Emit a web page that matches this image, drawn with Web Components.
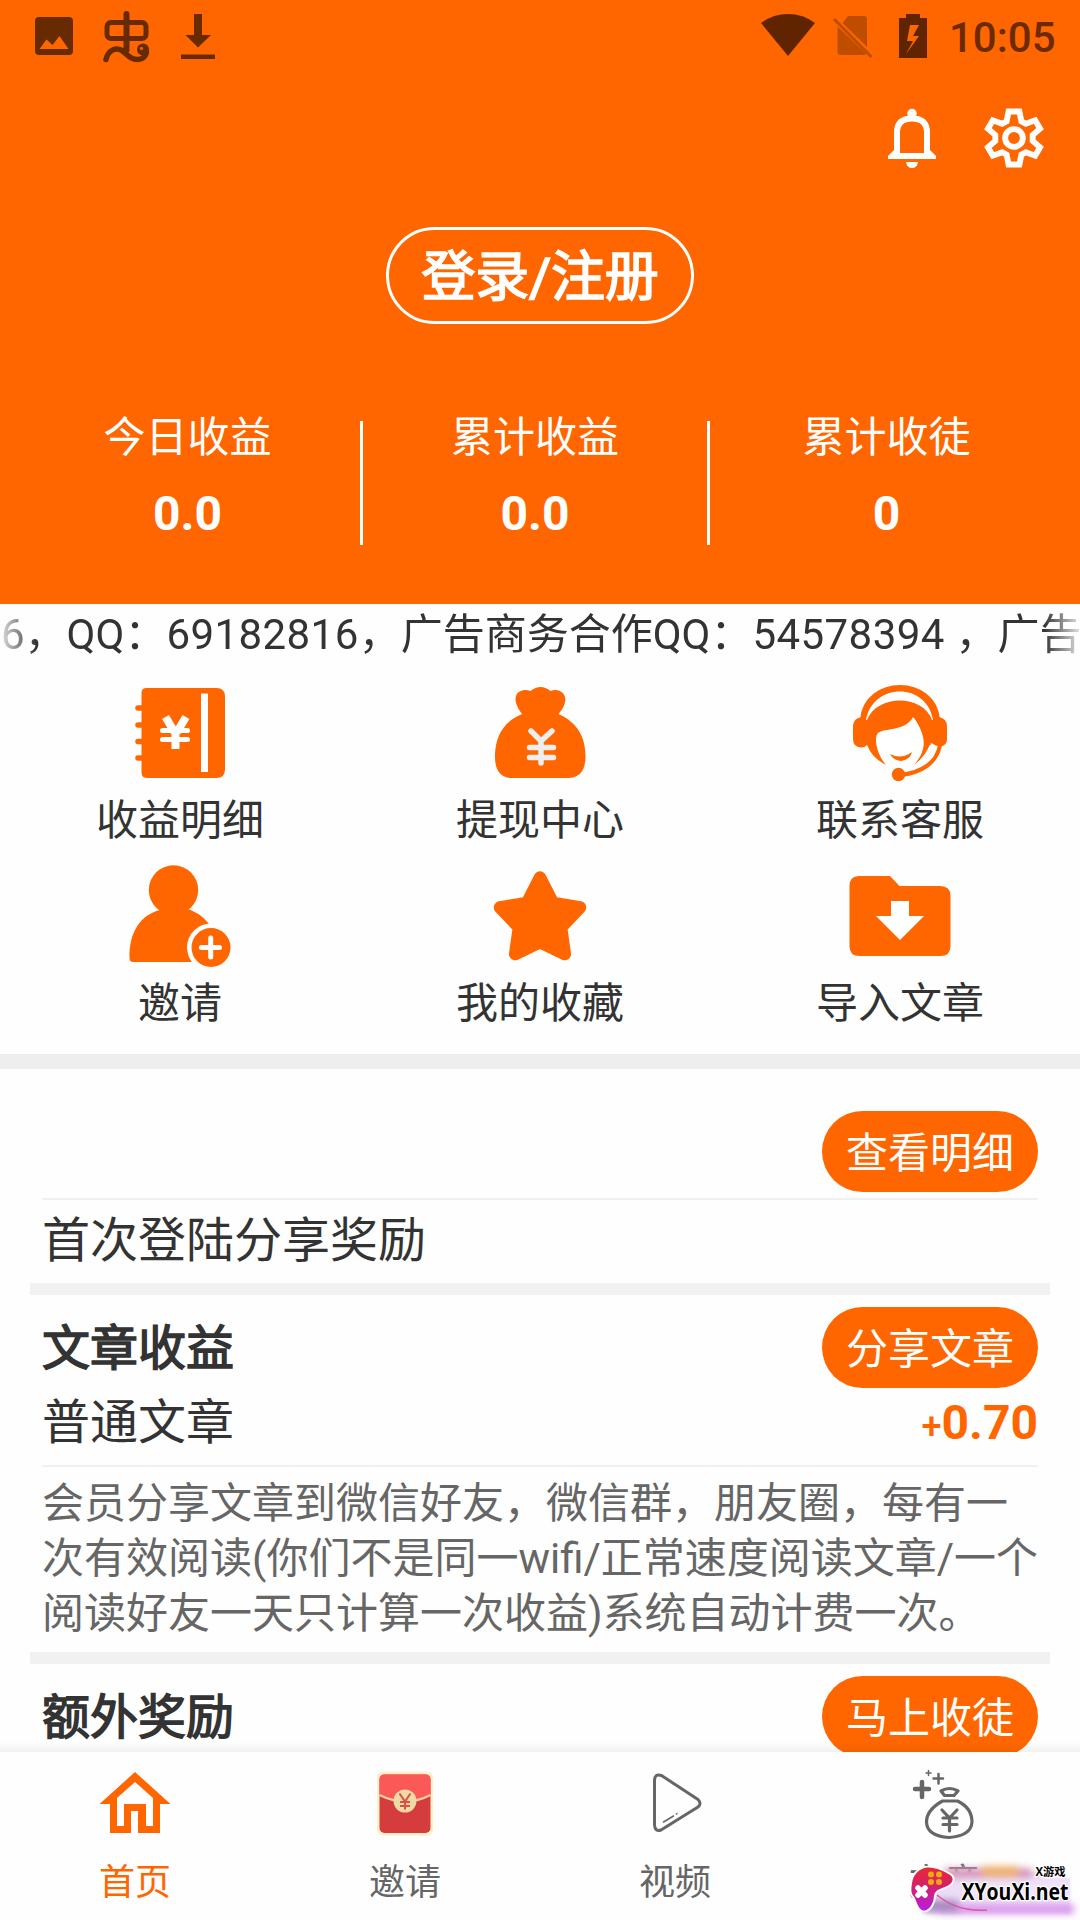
<!DOCTYPE html>
<html lang="zh-CN">
<head>
<meta charset="utf-8">
<title>首页</title>
<style>
html,body{margin:0;padding:0}
body{width:1080px;height:1920px;overflow:hidden;background:#fefefe;color:#333;font-family:Roboto,"Noto Sans CJK SC",sans-serif;font-size:42px}
.num{letter-spacing:.43px}
b{font-weight:400;-webkit-text-stroke:1.5px currentColor}
</style>
</head>
<body>
<app-shell>
  <app-header slot="header">
    <status-bar></status-bar>
    <stat-item label="今日收益" slot="stat">0.0</stat-item>
    <stat-item label="累计收益" slot="stat">0.0</stat-item>
    <stat-item label="累计收徒" slot="stat">0</stat-item>
  </app-header>
  <notice-ticker>6，QQ：<span class="num">69182816</span>，广告商务合作QQ：<span class="num">54578394 </span>，广告</notice-ticker>
  <menu-grid>
    <menu-item icon="book">收益明细</menu-item>
    <menu-item icon="bag">提现中心</menu-item>
    <menu-item icon="service">联系客服</menu-item>
    <menu-item icon="invite">邀请</menu-item>
    <menu-item icon="star">我的收藏</menu-item>
    <menu-item icon="folder">导入文章</menu-item>
  </menu-grid>
  <reward-card class="first">
    <pill-button slot="action">查看明细</pill-button>
    <span slot="note">首次登陆分享奖励</span>
  </reward-card>
  <reward-card class="article" rule-after>
    <b slot="title">文章收益</b>
    <pill-button slot="action">分享文章</pill-button>
    <span slot="sub">普通文章</span>
    <price-tag slot="price">0.70</price-tag>
    <span slot="text">会员分享文章到微信好友，微信群，朋友圈，每有一<br>次有效阅读(你们不是同一wifi/正常速度阅读文章/一个<br>阅读好友一天只计算一次收益)系统自动计费一次。</span>
  </reward-card>
  <reward-card class="extra">
    <b slot="title">额外奖励</b>
    <pill-button slot="action">马上收徒</pill-button>
  </reward-card>
  <tab-bar slot="tabs">
    <tab-item icon="home" active>首页</tab-item>
    <tab-item icon="packet">邀请</tab-item>
    <tab-item icon="play">视频</tab-item>
    <tab-item icon="money">文章</tab-item>
    <site-mark slot="mark"></site-mark>
  </tab-bar>
</app-shell>
<script>
const O = '#ff6600';
const ICONS = {
  image: `<svg width="38" height="38" viewBox="0 0 38 38"><path fill="#682a00" fill-rule="evenodd" d="M4 0h30q4 0 4 4v30q0 4-4 4H4q-4 0-4-4V4q0-4 4-4zM4.500 32h29L24.500 19l-7 9-6-5.500z"/></svg>`,
  bug: `<svg width="48" height="52" viewBox="0 0 48 52"><g fill="none" stroke="#682a00" stroke-width="5" stroke-linecap="round" stroke-linejoin="round"><rect x="4" y="11.500" width="39" height="16" rx="4"/><path stroke-width="6" d="M23.500 3v36"/><path stroke-width="5.500" d="M3 48.500C5 39 13 36 19 39.500 25 44 27 48.500 35 48.500 43 48 46 39 41 36.500"/></g><circle cx="40" cy="38.500" r="6" fill="#682a00"/><circle cx="38.500" cy="37.500" r="1.700" fill="#e65c00"/></svg>`,
  download: `<svg width="34" height="46" viewBox="0 0 34 46"><path fill="#682a00" d="M13 0h8v21h9L17 33.500 4.500 21H13zM0 40.500h34V45H0z"/></svg>`,
  wifi: `<svg width="54" height="42" viewBox="0 0 54 42"><path fill="#602500" d="M0 9Q12 0 27 0t27 9L27 42z"/></svg>`,
  sim: `<svg width="40" height="42" viewBox="0 0 40 42"><path fill="#bf4d00" d="M15 0h16q3 0 3 3v28L9.500 7zM4.500 10.500 33.500 38q-1 1-3 1h-23q-3 0-3-3z"/><path stroke="#bf4d00" stroke-width="3" d="m1 3 37.500 38"/></svg>`,
  battery: `<svg width="28" height="44" viewBox="0 0 28 44"><path fill="#602500" fill-rule="evenodd" d="M7 0h14v4h7v40H0V4h7zM11 11 8 27h6l-7 13 13-18h-6l6-11z"/></svg>`,
  bell: `<svg width="48" height="60" viewBox="0 0 48 60"><circle cx="24" cy="5.500" r="4.700" fill="#fff"/><path fill="none" stroke="#fff" stroke-width="6" d="M9 46V24.500q0-14 15-14t15 14V46"/><path fill="#fff" d="M0 51v-3l6-6V45h36v-3l6 6v3zM18 54h12q-1 6-6 6t-6-6z"/></svg>`,
  gear: `<svg width="60" height="60" viewBox="-.5 -.5 61 61"><g fill="none" stroke="#fff" stroke-width="6"><path d="M24.500 3h11l2 10 4.500 2.500 9.500-3.500 5 8.500-7.500 6.500v6l7.500 6.500-5 8.500-9.500-3.500-4.500 2.500-2 10h-11l-2-10-4.500-2.500-9.500 3.500-5-8.500 7.500-6.500v-6l-7.500-6.500 5-8.500 9.500 3.500 4.500-2.500z"/><circle cx="30" cy="30" r="9"/></g></svg>`,
  book: `<svg width="108" height="108" viewBox="2.500 0 108 108"><path fill="${O}" d="M21 9h72q8.500 0 8.500 8.500v73Q101.500 99 93 99H24q-6 0-6-5.500V14q0-5 5-5z"/><path stroke="${O}" stroke-width="5.500" stroke-linecap="round" d="M14.500 29h6M14.500 46h6M14.500 62.500h6M14.500 79h6"/><path fill="#fff" d="M77.500 14.500h7V93h-7z"/><path stroke="#fff" stroke-width="8" fill="none" d="m42 38 9 15M62.500 38l-9 15M52 49v21"/><path stroke="#fff" stroke-width="5" stroke-linecap="round" d="M39 51.500h25M39 60.500h25"/></svg>`,
  bag: `<svg width="108" height="108" viewBox="0 0 108 108"><path fill="${O}" d="M36 35C26 22 28 12 39 11q3 0 5.500 1 10-8 20 0 2-1 5-1c12 1 13 13 3 24C92 44 99 58 99.500 76 100 92 93 99 82 99H26C15 99 8.500 92 9 76 9.500 58 17 43 36 35z"/><path fill="none" stroke="#eee" stroke-width="5.500" stroke-linecap="round" stroke-linejoin="round" d="m45 52 10 10 11-10M55 62v22M43.500 68.500h24M43.500 78.500h24"/></svg>`,
  service: `<svg width="108" height="108" viewBox="0 0 108 108"><path fill="none" stroke="${O}" stroke-width="7" d="M17.500 41C21-1 87-1 90.500 41"/><path fill="${O}" d="M18 38q-11 0-11 10v12q0 8 8 8.500 4 0 6-2.500 5 13 19 20C30 74 28 58 32 54c6-5 28-2 35-16 13 16 11 34 2 47 10-5 14-12 16-21l4 2c8 4 12-1 12-6V47q0-7-8-9-7-20-25-23Q30 12 20 38z"/><path fill="#fff" d="M20 41C27 3 81 3 87 41h-1C77 15 31 15 21 41z"/><path fill="#fff" d="M30 60c1-6 23-4 34-12 3-3 4-6 4-9 6 9 12 20 9 31q-2 8-7 13H40Q31 76 30 60z"/><path fill="${O}" d="M44 75q11 6 22-2-2 8-11 9-8-1-11-7z"/><path fill="none" stroke="#fff" stroke-width="5" d="M86 67q-5 13-18 22"/><path fill="none" stroke="${O}" stroke-width="4" d="M94 66c-3 18-19 28-40 30"/><circle cx="52.500" cy="95.500" r="6.700" fill="${O}"/></svg>`,
  invite: `<svg width="108" height="108" viewBox="0 0 108 108"><circle cx="47.500" cy="28" r="24.700" fill="${O}"/><path fill="${O}" d="M34 47h28C82 54 94 72 94 100H7q-3.500 0-3.500-4C3 71 14 53 34 48z"/><circle cx="85" cy="85.500" r="24" fill="#fefefe"/><circle cx="85" cy="85.500" r="19.500" fill="${O}"/><path stroke="#fff" stroke-width="5" stroke-linecap="round" d="M75.500 85.500h18M84.700 76v19"/></svg>`,
  star: `<svg width="108" height="108" viewBox="0 0 108 108"><path fill="${O}" stroke="${O}" stroke-width="12.500" stroke-linejoin="round" d="m54 15.500 13 25.500L94 45.500 75 65.500l3.800 26.500L54 80 29.200 92 33 65.500 14 45.500 41 41z"/></svg>`,
  folder: `<svg width="108" height="108" viewBox="0 0 108 108"><path fill="${O}" d="M13 14h31l9.500 10H94q10.500 0 10.500 10v50q0 10-10 10h-81Q3.500 94 3.500 84V24Q3.500 14 13 14z"/><path fill="#fff" d="M45 39h18v15h15L54 78 30 54h15z"/></svg>`,
  home: `<svg width="72" height="72" viewBox="0 0 72 72"><path fill="${O}" fill-rule="evenodd" d="M36 5 71.500 37H61v29H39V44h-7v22H11V37H.5zM36 15 18 31v28h7V37h22v22h7V31z"/></svg>`,
  packet: `<svg width="72" height="72" viewBox="-.5 .5 72 72"><rect x="7.500" y="5" width="56" height="64" rx="6" fill="#fff0c8"/><rect x="10" y="8" width="51" height="58.500" rx="5" fill="#d43c3d"/><path fill="#fb5858" d="M10 29V13q0-5 5-5h41q5 0 5 5v16Q36 41 10 29z"/><path fill="none" stroke="#f6d0a0" stroke-width="2" d="M10 28.500q26 13 51 0"/><circle cx="35.500" cy="34.500" r="11.500" fill="#efd9a5"/><path fill="none" stroke="#d95149" stroke-width="2" d="m30 27 5.500 8 5.500-8M35.500 35v8M30.500 35.500h10M30.500 39.500h10"/></svg>`,
  play: `<svg width="72" height="72" viewBox="0 1 72 72"><path fill="none" stroke="#666" stroke-width="3" stroke-linejoin="round" d="M15.500 15q0-8 7-5.500l36.500 24q4 4 0 7.500L22 64q-6 2-6.500-5z"/><path stroke="#666" stroke-width="1.500" stroke-linecap="round" d="m24.500 56 10-6M37.500 48l.5-.3"/></svg>`,
  money: `<svg width="72" height="72" viewBox="0 1 72 72"><g fill="none" stroke="#666" stroke-width="3.200" stroke-linecap="round" stroke-linejoin="round"><path d="M33.500 35h15C59 40 63 48 63 56q-1 14-23 15.500Q18 70 17.500 56q0-12 16-21zM32 25q8.500-5 17 0l-4 4.500h-9.500z"/><path d="m33 44 7.500 8 7.500-8M40.500 52v13M34 52h14M34 58.500h14"/><path stroke-width="4.500" d="M6 23h14M13 16v15"/><path stroke-width="2.500" d="M24.500 12.500H34M29.500 8v9.500"/><path stroke-width="1.500" d="M17 7h5M19.500 4.500v5"/></g></svg>`
};
function define(name, css, html) {
  customElements.define(name, class extends HTMLElement {
    constructor() {
      super();
      this.attachShadow({mode: 'open'});
    }
    connectedCallback() {
      const h = typeof html === 'function' ? html(this) : html;
      this.shadowRoot.innerHTML = `<style>:host{display:block;box-sizing:border-box}svg{display:block;overflow:visible}${css}</style>${h}`;
    }
  });
}
define('ui-icon', ':host{flex:none}', el => ICONS[el.getAttribute('name')]);

define('app-shell', `:host{display:flex;flex-direction:column;width:1080px;height:1920px;overflow:hidden}
main{flex:1;min-height:0;overflow:hidden;position:relative}
main::after{content:"";position:absolute;left:0;right:0;bottom:0;height:10px;background:linear-gradient(#0000,rgba(0,0,0,.05))}`,
`<slot name="header"></slot><main><slot></slot></main><slot name="tabs"></slot>`);

define('status-bar', `:host{height:72px}
.row{display:flex;align-items:flex-start;height:72px;color:#6b2a00}
.row>*{flex:none}
time{font-weight:500;font-size:42px;line-height:49px;margin:13px 0 0 22px}`,
`<div class="row">
<ui-icon name="image" style="margin:17px 0 0 35px"></ui-icon>
<ui-icon name="bug" style="margin:11px 0 0 30px"></ui-icon>
<ui-icon name="download" style="margin:14px 0 0 30px"></ui-icon>
<ui-icon name="wifi" style="margin:14px 0 0 auto"></ui-icon>
<ui-icon name="sim" style="margin:16px 0 0 18px"></ui-icon>
<ui-icon name="battery" style="margin:14px 0 0 26px"></ui-icon>
<time style="width:131px">10:05</time>
</div>`);

define('app-header', `:host{height:604px;flex:none;background:${O};color:#fff}
.tools{display:flex;justify-content:flex-end;gap:48px;padding:36px 36px 0 0;height:119px;box-sizing:border-box}
.login{width:308px;height:97px;box-sizing:border-box;border:3px solid #fff;border-radius:49px;margin:36px auto 0;font-size:54px;font-weight:400;-webkit-text-stroke:1.7px #fff;line-height:95px;text-align:center;letter-spacing:-.3px}
.stats{display:grid;grid-template-columns:348px 347px 356px;padding:0 14px 0 15px;margin-top:82px}`,
`<slot></slot><div class="tools"><ui-icon name="bell"></ui-icon><ui-icon name="gear"></ui-icon></div>
<div class="login">登录/注册</div><div class="stats"><slot name="stat"></slot></div>`);

define('stat-item', `:host{display:flex;flex-direction:column;align-items:center;height:153px;border-right:3px solid transparent}
:host(:not(:last-of-type)){border-image:linear-gradient(#0000 16px,#fff 16px,#fff 138px,#0000 138px) 1}
.l{font-size:42px;line-height:56px;margin-top:4px}
.v{font-size:48px;font-weight:700;line-height:56px;margin-top:20px}`,
el => `<div class="l">${el.getAttribute('label')}</div><div class="v"><slot></slot></div>`);

define('notice-ticker', `:host{height:62px;line-height:62px;padding-left:1px;white-space:pre;overflow:hidden;font-size:42px;-webkit-mask:linear-gradient(90deg,#0002,#000 36px,#000 1044px,#0002);mask:linear-gradient(90deg,#0002,#000 36px,#000 1044px,#0002)}`, `<slot></slot>`);

define('menu-grid', `:host{display:grid;grid-template-columns:repeat(3,360px);grid-auto-rows:183px;height:403px;padding-top:13px;border-bottom:15px solid #eee}`, `<slot></slot>`);
define('menu-item', `:host{display:flex;flex-direction:column;align-items:center}.t{line-height:56px;margin-top:6px}`,
el => `<ui-icon name="${el.getAttribute('icon')}"></ui-icon><div class="t"><slot></slot></div>`);

define('pill-button', `:host{width:216px;height:81px;border-radius:41px;background:${O};color:#fff;font-size:42px;font-weight:400;line-height:85px;text-align:center;flex:none}`, `<slot></slot>`);
define('price-tag', `:host{color:${O};font-size:48px;font-weight:700;line-height:66px}small{font-size:36px;font-weight:500}`, `<small>+</small><slot></slot>`);

define('reward-card', `:host{margin:0 30px;padding:12px 12px 0;font-size:48px}
:host(.first){height:226px;padding-top:42px;border-bottom:12px solid #f1f1f1}
:host(.article){height:369px;border-bottom:12px solid #f1f1f1}
.top{display:flex;justify-content:space-between;align-items:flex-start;height:81px}
.title{line-height:66px;padding-top:9px}
.sub{display:flex;justify-content:space-between;height:64px;line-height:66px;padding-top:2px}
.rule{height:2px;background:#f0f0f0;margin-top:6px}
:host([rule-after]) .rule{margin-top:11px}
.note{line-height:66px;margin-top:8px}
.text{font-size:42px;line-height:55px;color:#666;margin-top:9px;white-space:nowrap}
:host(.first) .sub,:host(.first) .text,:host(.article) .note,:host(.extra) .sub,:host(.extra) .text,:host(.extra) .rule{display:none}`,
`<div class="top"><span class="title"><slot name="title"></slot></span><slot name="action"></slot></div>
<div class="sub"><slot name="sub"></slot><slot name="price"></slot></div><div class="rule"></div>
<div class="note"><slot name="note"></slot></div><div class="text"><slot name="text"></slot></div>`);

define('tab-bar', `:host{display:flex;height:168px;flex:none;background:#fefefe;position:relative}::slotted(tab-item){flex:1}`, `<slot></slot><slot name="mark"></slot>`);
define('tab-item', `:host{display:flex;flex-direction:column;align-items:center;font-size:36px;color:#666;padding-top:15px}
:host([active]){color:${O}}.t{line-height:48px;margin-top:20px}`,
el => `<ui-icon name="${el.getAttribute('icon')}"></ui-icon><div class="t"><slot></slot></div>`);

define('site-mark', `:host{position:absolute;left:908px;top:106px;width:172px;height:62px}`,
`<svg width="172" height="62" viewBox="0 0 172 62"><defs><linearGradient id="g" x1="0" y1="0" x2="0" y2="1"><stop offset="0" stop-color="#e82a30"/><stop offset=".45" stop-color="#d3206e"/><stop offset="1" stop-color="#b51ee8"/></linearGradient><filter id="b" x="-20%" y="-40%" width="140%" height="180%"><feGaussianBlur stdDeviation="3.500"/></filter><filter id="s" x="-20%" y="-40%" width="140%" height="180%"><feGaussianBlur stdDeviation="1.200"/></filter></defs>
<path filter="url(#s)" fill="#ecdcf6" d="M14 14h120v6h28v36H14z"/>
<g filter="url(#b)"><path fill="#d79abc" d="M36 10h88v10H36z"/><path fill="#eeb070" d="M74 8h36v11H74z"/><path fill="#f3e6fb" d="M56 25h104v16H56z"/><path fill="#dc9ced" d="M30 46h136v10H30z"/><path fill="#a78ac0" d="M18 42h32v12H18z"/></g>
<path fill="url(#g)" stroke="#fff" stroke-width="2" stroke-linejoin="round" d="M4 34C5 22 13 16 20 15c8-1 16 4 23 8 6 4 4 12-3 15-8 4-11 4-12 10 0 8-4 17-11 18-8-1-8-14-12-18-2-3-2-8-1-14z" transform="translate(-1,-4.500) scale(1,.88)"/>
<path fill="none" stroke="#db559f" stroke-width="1.500" d="M29 37q20 17 50 15"/>
<g fill="#f6a915"><circle cx="23" cy="16.500" r="3"/><circle cx="31" cy="16.500" r="3"/><circle cx="23" cy="24" r="3"/><circle cx="31" cy="24" r="3"/></g>
<path stroke="#fff" stroke-width="5.500" stroke-linecap="round" d="m10 30 7 7m0-7-7 7"/>
<g font-family="'Open Sans','Noto Sans CJK SC',sans-serif" font-weight="700" fill="#000" stroke="#fff" stroke-width="2.500" paint-order="stroke" stroke-linejoin="round"><text x="127.500" y="18" font-size="11.500" textLength="30" lengthAdjust="spacingAndGlyphs">X游戏</text><text x="53.500" y="41.500" font-size="23.500" textLength="107" lengthAdjust="spacingAndGlyphs">XYouXi.net</text></g></svg>`);
</script>
</body>
</html>
